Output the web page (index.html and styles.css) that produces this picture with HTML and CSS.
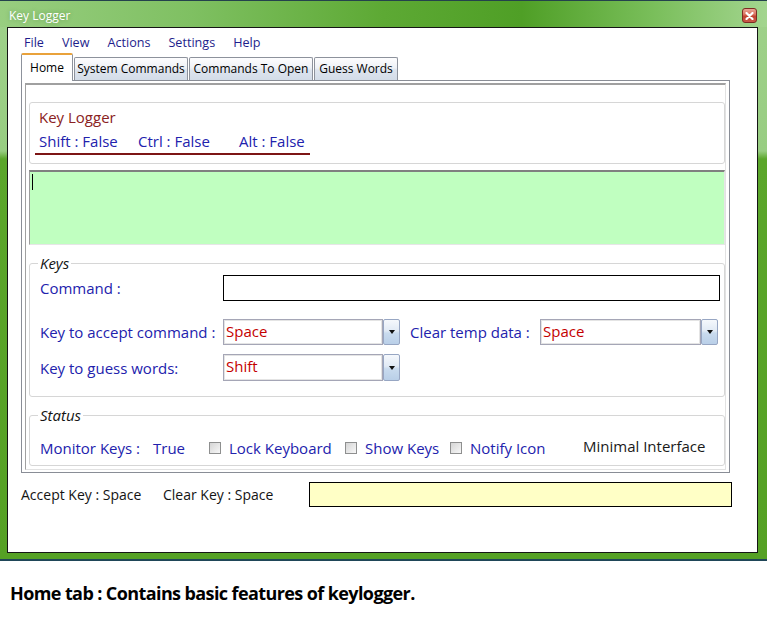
FILE: index.html
```html
<!DOCTYPE html>
<html>
<head>
<meta charset="utf-8">
<title>Key Logger</title>
<link rel="stylesheet" href="styles.css">
</head>
<body>
<div class="window">
  <div class="titlebar">
    <span class="title">Key Logger</span>
    <span class="close"><svg width="9" height="8" viewBox="0 0 9 8"><path d="M1.5 1 L7.5 7 M7.5 1 L1.5 7" stroke="#fff" stroke-width="2.2" stroke-linecap="round"/></svg></span>
  </div>
  <div class="client">
    <nav class="menubar">
      <span>File</span><span>View</span><span>Actions</span><span>Settings</span><span>Help</span>
    </nav>
    <div class="tabs">
      <div class="tab active">Home</div>
      <div class="tab t-sys">System Commands</div>
      <div class="tab t-open">Commands To Open</div>
      <div class="tab t-guess">Guess Words</div>
    </div>
    <div class="tabpage">
      <div class="panel">
        <div class="group">
          <div class="gtitle">Key Logger</div>
          <div class="mods"><span>Shift : False</span><span>Ctrl : False</span><span>Alt : False</span></div>
        </div>
        <div class="logbox"><span class="caret"></span></div>
        <fieldset class="keys">
          <legend>Keys</legend>
          <div class="row r1">
            <span class="lbl">Command :</span>
            <span class="textbox"></span>
          </div>
          <div class="row r2">
            <span class="lbl">Key to accept command :</span>
            <span class="combo"><span class="field">Space</span><span class="btn"><span class="arrow"></span></span></span>
            <span class="lbl2">Clear temp data :</span>
            <span class="combo c2"><span class="field">Space</span><span class="btn"><span class="arrow"></span></span></span>
          </div>
          <div class="row r3">
            <span class="lbl">Key to guess words:</span>
            <span class="combo c3"><span class="field">Shift</span><span class="btn"><span class="arrow"></span></span></span>
          </div>
        </fieldset>
        <fieldset class="status">
          <legend>Status</legend>
          <div class="srow">
            <span>Monitor Keys :</span>
            <span>True</span>
            <span class="chk"><span class="box"></span>Lock Keyboard</span>
            <span class="chk"><span class="box"></span>Show Keys</span>
            <span class="chk"><span class="box"></span>Notify Icon</span>
            <span class="minimal">Minimal Interface</span>
          </div>
        </fieldset>
      </div>
    </div>
    <div class="bottom">
      <span class="acc">Accept Key : Space</span>
      <span class="clr">Clear Key : Space</span>
      <span class="ybox"></span>
    </div>
  </div>
</div>
<p class="caption">Home tab : Contains basic features of keylogger.</p>
</body>
</html>
```

FILE: styles.css
```css
body {
  margin: 0;
  background: #fff;
  font-family: "Open Sans", "Noto Sans", sans-serif;
}

.window {
  width: 767px;
  box-sizing: border-box;
  padding: 0 9px 6px 7px;
  border-top: 1px solid #24424c;
  border-bottom: 2px solid #1f4658;
  background: linear-gradient(to bottom, #9fd18a 0, #98cd82 150px, #5ba62b 158px, #55a124 100%);
}

.titlebar {
  height: 26px;
  margin: 0 -9px 0 -7px;
  padding: 0 10px 0 9px;
  display: flex;
  justify-content: space-between;
  align-items: flex-start;
  background: linear-gradient(90deg, #98ce80 0%, #7fc062 25%, #5da934 50%, #4f9f26 68%, #79be5a 85%, #a3d58f 100%);
}

.title {
  margin-top: 7px;
  color: #fff;
  font-size: 12px;
  line-height: 16px;
  text-shadow: 0 0 4px rgba(40, 80, 20, 0.35);
}

.close {
  margin-top: 7px;
  width: 15px;
  height: 15px;
  box-sizing: border-box;
  border: 1px solid #7c2c22;
  border-radius: 3px;
  background: linear-gradient(#eba596 0%, #d96e5a 45%, #c2432f 55%, #c9594a 100%);
  display: flex;
  align-items: center;
  justify-content: center;
}

.client {
  height: 526px;
  box-sizing: border-box;
  border: 1px solid #151515;
  background: #fff;
}

.menubar {
  display: flex;
  height: 25px;
  padding-left: 7px;
  font-size: 12.6px;
  color: #1e1e8c;
}

.menubar span {
  padding: 6px 9px 0;
  line-height: 18px;
}

.tabs {
  display: flex;
  align-items: flex-end;
  gap: 1px;
  height: 27px;
  margin-left: 13px;
}

.tab {
  height: 23px;
  box-sizing: border-box;
  border: 1px solid #8d929c;
  border-bottom: none;
  border-radius: 2px 2px 0 0;
  background: linear-gradient(#fdfdfe 0%, #eef1f6 45%, #dde4ee 55%, #d3dce8 100%);
  font-size: 12px;
  line-height: 21px;
  text-align: center;
  color: #000;
  white-space: nowrap;
}

.tab.active {
  position: relative;
  z-index: 1;
  width: 52px;
  height: 28px;
  margin-bottom: -1px;
  border-top: 2px solid #e9a23b;
  background: #fff;
  line-height: 25px;
}

.t-sys { width: 114px; }
.t-open { width: 124px; }
.t-guess { width: 84px; }

.tabpage {
  width: 709px;
  margin-left: 13px;
  box-sizing: border-box;
  border: 1px solid #898d96;
  padding: 2px 3px;
  background: #fff;
}

.panel {
  border-top: 2px solid #a0a0a0;
  border-left: 1px solid #a0a0a0;
  border-right: 1px solid #e2e2e2;
  border-bottom: 1px solid #e2e2e2;
  padding: 17px 0 3px 3px;
}

.group {
  width: 696px;
  box-sizing: border-box;
  border: 1px solid #d6d6d6;
  border-radius: 3px;
  padding: 4px 0 8px 5px;
}

.gtitle {
  margin-left: 4px;
  color: #8a2222;
  font-size: 15px;
  line-height: 20px;
}

.mods {
  display: grid;
  grid-template-columns: 99px 101px auto;
  width: 275px;
  box-sizing: border-box;
  margin-top: 4px;
  padding: 0 0 2px 4px;
  border-bottom: 2px solid #7d1515;
  color: #2222ad;
  font-size: 15px;
  line-height: 20px;
}

.logbox {
  display: block;
  width: 696px;
  height: 75px;
  margin-top: 6px;
  box-sizing: border-box;
  border-top: 2px solid #808080;
  border-left: 1px solid #9c9c9c;
  border-right: 1px solid #e6e6e6;
  border-bottom: 1px solid #e6e6e6;
  background: #c0ffc0;
  padding: 2px 0 0 2px;
}

.caret {
  display: block;
  width: 1px;
  height: 16px;
  background: #000;
}

fieldset {
  margin: 0;
  min-inline-size: 0;
  width: 696px;
  box-sizing: border-box;
  border: 1px solid #d6d6d6;
  border-radius: 3px;
  font-size: 15px;
  color: #2222ad;
}

legend {
  margin-left: -2px;
  padding: 0 2px;
  font-style: italic;
  font-size: 15px;
  line-height: 18px;
  color: #141414;
}

.keys {
  margin-top: 9px;
  padding: 3px 0 15px 10px;
}

.row {
  display: flex;
  align-items: center;
}

.r1 { height: 26px; }
.r2 { height: 26px; margin-top: 18px; }
.r3 { height: 27px; margin-top: 9px; }

.lbl {
  flex: none;
  width: 183px;
}

.lbl2 {
  flex: none;
  width: 130px;
  margin-left: 10px;
}

.textbox {
  width: 497px;
  height: 26px;
  box-sizing: border-box;
  border: 1px solid #000;
  background: #fff;
}

.combo {
  display: flex;
  width: 177px;
  height: 26px;
}

.combo.c2 { width: 178px; }
.combo.c3 { height: 27px; }

.field {
  flex: 1;
  box-sizing: border-box;
  border: 1px solid #a5a6b6;
  box-shadow: inset 1px 1px 0 #e4e4e4, inset -1px -1px 0 #e4e4e4;
  padding-left: 2px;
  color: #c40000;
  line-height: 23px;
  background: #fff;
}

.btn {
  flex: none;
  width: 17px;
  box-sizing: border-box;
  border: 1px solid #97a6c3;
  border-radius: 2px;
  background: linear-gradient(#f5f8fc 0%, #e1eaf5 45%, #c9dbee 55%, #b9cfe8 100%);
  display: flex;
  align-items: center;
  justify-content: center;
}

.arrow {
  width: 0;
  height: 0;
  border-left: 3.5px solid transparent;
  border-right: 3.5px solid transparent;
  border-top: 4px solid #111;
}

.status {
  margin-top: 9px;
  padding: 11px 0 5px 10px;
}

.srow {
  display: grid;
  grid-template-columns: 113px 56px 136px 105px 133px auto;
  align-items: center;
  line-height: 22px;
}

.chk {
  display: flex;
  align-items: center;
  gap: 8px;
}

.box {
  width: 12px;
  height: 12px;
  box-sizing: border-box;
  border: 1px solid #8e8f8f;
  background: linear-gradient(135deg, #d5d5d5, #f7f7f7);
}

.minimal {
  margin-bottom: 3px;
  color: #1a1a1a;
}

.bottom {
  display: flex;
  align-items: center;
  height: 25px;
  margin: 9px 0 0 13px;
  font-size: 14px;
  color: #141414;
}

.acc { width: 142px; flex: none; }
.clr { width: 146px; flex: none; }

.ybox {
  width: 423px;
  height: 25px;
  box-sizing: border-box;
  border: 1px solid #000;
  background: #ffffc6;
}

.caption {
  margin: 21px 0 0 10px;
  font-family: "Open Sans", sans-serif;
  font-weight: bold;
  font-size: 18px;
  letter-spacing: -0.6px;
  line-height: 22px;
  color: #000;
}
```
